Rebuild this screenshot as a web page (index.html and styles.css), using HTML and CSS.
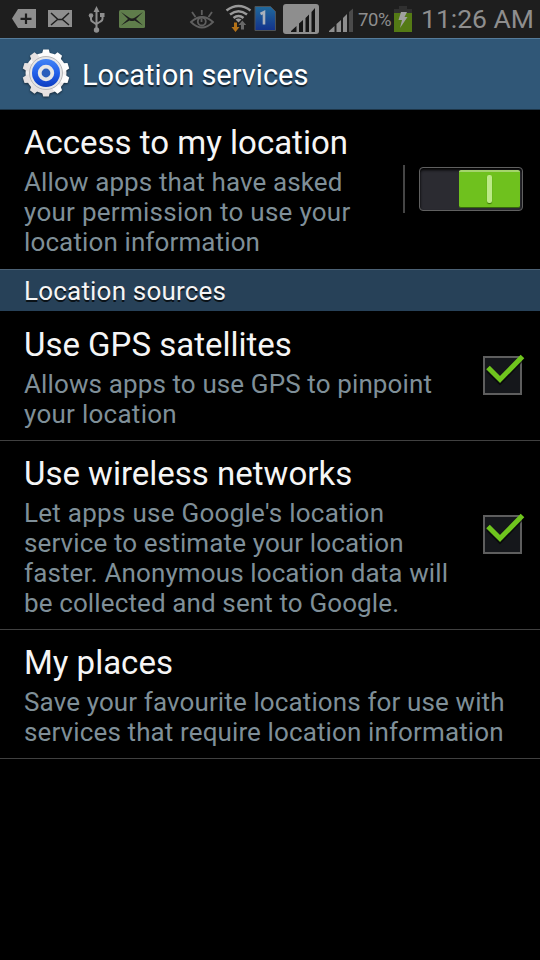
FILE: index.html
```html
<!DOCTYPE html>
<html lang="en">
<head>
<meta charset="utf-8">
<title>Location services</title>
<link rel="stylesheet" href="styles.css">
</head>
<body>
<div class="status">
  <svg class="status-icons" width="354" height="38" viewBox="0 0 354 38">
    <path d="M18 9H36V28H18L12 18.5Z" fill="#8e8e8e"/>
    <path d="M26 13.500V24M20.500 18.800H31.500" stroke="#1e1e1e" stroke-width="2.200"/>
    <rect x="48" y="10" width="24" height="17" fill="#8e8e8e"/>
    <path d="M51 13L58 19.500H62L69 13M51 25L57.500 19.500M69 25L62.500 19.500" fill="none" stroke="#1e1e1e" stroke-width="1.500"/>
    <g fill="none" stroke="#8e8e8e" stroke-width="2">
      <path d="M96.500 10V29M91 16V19.500Q91 21 93 22L96.500 24.500M102.500 16V19Q102.500 20.500 100.500 21.500L96.500 24"/>
      <path d="M96.500 6L99.500 12H93.500ZM100 13H104.500V17H100Z" fill="#8e8e8e" stroke="none"/>
      <circle cx="91" cy="15.500" r="2.300" fill="#8e8e8e" stroke="none"/>
      <circle cx="96.500" cy="30" r="2.700" fill="#8e8e8e" stroke="none"/>
    </g>
    <rect x="119" y="10" width="26" height="18" rx="1.500" fill="#5f7d4b"/>
    <path d="M121 12L129 17.500Q132 19.500 135 17.500L143 12L136 19L143 25.500L134.500 20.500Q132 21.500 129.500 20.500L121 25.500L128 19Z" fill="#1e1e1e"/>
    <g fill="none" stroke="#5f5f5f" stroke-width="1.800">
      <path d="M191 22Q202 12 213 22Q202 33 191 22Z"/>
      <circle cx="201.800" cy="21.500" r="4"/>
      <path d="M201.800 10V15M192 12L195.500 17M212 12L208.500 17M201.500 22V18.500"/>
    </g>
    <g fill="none" stroke="#999" stroke-width="2.500">
      <path d="M226.500 10.500Q238.500 1.500 250.500 10.500M230 14.500Q238.500 8 247 14.500M233.500 18Q238.500 14 243.500 18"/>
      <path d="M235.500 19.500Q238.500 17.500 241.500 19.500L238.500 22.500Z" fill="#999" stroke="none"/>
    </g>
    <path d="M234 22.500H237V27H239.500L235.500 32L231.500 27H234Z" fill="#b47218"/>
    <path d="M241 29.500V25H238.500L242.300 20.500L246.200 25H244V29.500Z" fill="#686868"/>
    <path d="M255 6.500H270.500L275.500 11.500V30.500H255Z" fill="url(#sim)" stroke="#4d5358"/>
    <path d="M260.500 14L264 12.200V24.500" fill="none" stroke="#aab2bc" stroke-width="2.600"/>
    <rect x="283" y="4" width="36" height="30" rx="3" fill="#8e8e8e"/>
    <path d="M291 32V31L296.500 26V32ZM299 32V23.500L303 20V32ZM305.500 32V18L309 14.500V32ZM311.500 32V12L315 8V32Z" fill="#151515"/>
    <path d="M329 32V31L334.500 26V32ZM336.500 32V24L341 20V32ZM343 32V18L347 14V32Z" fill="#8e8e8e"/>
    <path d="M349 32V12L353 8.500V32Z" fill="#4b4b4b"/>
    <defs><linearGradient id="sim" x2="0" y2="1"><stop stop-color="#216a9c"/><stop offset="1" stop-color="#12328c"/></linearGradient></defs>
  </svg>
  <span class="percent">70%</span>
  <svg class="battery" width="18" height="26" viewBox="0 0 18 26">
    <path d="M5 0H13V3H18V26H0V3H5Z" fill="#303030"/>
    <rect y="7" width="18" height="19" fill="#547a15"/>
    <path d="M7 6H13L10.500 11H13.500L6 22L8 14H4.500Z" fill="#a0a0a0"/>
  </svg>
  <span class="clock">11:26 AM</span>
</div>
<header class="header">
  <svg class="gear" width="50" height="50" viewBox="-25 -25 50 50">
    <defs>
      <linearGradient id="metal" x2="0" y2="1"><stop stop-color="#fff"/><stop offset="1" stop-color="#e4dfdf"/></linearGradient>
      <linearGradient id="blue" x2="0" y2="1"><stop stop-color="#4284f6"/><stop offset=".5" stop-color="#2260ea"/><stop offset="1" stop-color="#0c3cc0"/></linearGradient>
    </defs>
    <g fill="url(#metal)">
      <circle r="20.500"/>
      <path id="teeth" d="M-4 -19L-2.800 -23.500H2.800L4 -19V19L2.800 23.500H-2.800L-4 19Z"/>
      <use href="#teeth" transform="rotate(36)"/><use href="#teeth" transform="rotate(72)"/><use href="#teeth" transform="rotate(108)"/><use href="#teeth" transform="rotate(144)"/>
    </g>
    <circle r="16.500" fill="#e5e5e7" stroke="#b8b8ba"/>
    <circle r="14" fill="url(#blue)"/>
    <circle r="6.300" fill="#2a5ebb" stroke="#e6e6e6" stroke-width="3.800"/>
  </svg>
  <h1 class="header-title">Location services</h1>
</header>
<main>
  <section class="row row-access">
    <div class="text">
      <h2 class="title">Access to my location</h2>
      <p class="summary">Allow apps that have asked<br><span class="wide">your permission to use your</span><br>location information</p>
    </div>
    <div class="switch-area"><div class="switch"><div class="thumb"><div class="mark"></div></div></div></div>
  </section>
  <h2 class="section">Location sources</h2>
  <section class="row row-first">
    <div class="text">
      <h2 class="title">Use GPS satellites</h2>
      <p class="summary">Allows apps to use GPS to pinpoint<br><span class="wide">your location</span></p>
    </div>
    <svg class="check" width="44" height="42" viewBox="0 0 44 42"><rect x="2" y="4" width="37" height="37" fill="#15171b" stroke="#5e5e5e" stroke-width="2"/><path d="M6 17L18 29L40 6" fill="none" stroke="#000" stroke-opacity=".55" stroke-width="5"/><path d="M6 14.500L18 26.500L40.500 3.500" fill="none" stroke="#6fc51e" stroke-width="5"/></svg>
  </section>
  <section class="row">
    <div class="text">
      <h2 class="title">Use wireless networks</h2>
      <p class="summary"><span class="wide">Let apps use Google's location</span><br>service to estimate your location<br>faster. Anonymous location data will<br>be collected and sent to Google.</p>
    </div>
    <svg class="check" width="44" height="42" viewBox="0 0 44 42"><rect x="2" y="4" width="37" height="37" fill="#15171b" stroke="#5e5e5e" stroke-width="2"/><path d="M6 17L18 29L40 6" fill="none" stroke="#000" stroke-opacity=".55" stroke-width="5"/><path d="M6 14.500L18 26.500L40.500 3.500" fill="none" stroke="#6fc51e" stroke-width="5"/></svg>
  </section>
  <section class="row">
    <div class="text">
      <h2 class="title">My places</h2>
      <p class="summary">Save your favourite locations for use with<br>services that require location information</p>
    </div>
  </section>
</main>
</body>
</html>
```
FILE: styles.css
```css
* { box-sizing: border-box; margin: 0; }
body {
  width: 540px; height: 960px; overflow: hidden;
  background: #000; color: #f5f5f5;
  font-family: Roboto, sans-serif; font-weight: 400;
}
svg { display: block; flex: none; }
h1, h2 { font-weight: 400; white-space: nowrap; }
.status { display: flex; height: 38px; background: #1e1e1e; color: #8e8e8e; }
.percent { width: 36px; margin-left: 4px; font-size: 18.5px; letter-spacing: -.4px; line-height: 40px; white-space: nowrap; }
.battery { margin-top: 6px; }
.clock { margin-left: 9px; font-size: 26.5px; line-height: 38px; white-space: nowrap; }
.header {
  display: flex; align-items: center; height: 72px; padding: 0 0 2px 21px;
  background: #305777; border-top: 1px solid #557b9a; border-bottom: 1px solid #1d3548;
}
.gear { filter: drop-shadow(0 1px 1px #0008); }
.header-title { margin: 4px 0 0 11px; font-size: 29px; text-shadow: 0 2px 1px #0009; color: #fff; }
.row {
  display: flex; justify-content: space-between; align-items: center;
  padding: 13px 14px 11px 24px; border-bottom: 1px solid #404040;
}
.row-access { height: 159px; border: 0; padding: 11px 17px 11px 24px; }
.row-first { padding-top: 14px; }
.title { font-size: 33px; line-height: 40px; }
.summary { margin-top: 4px; color: #7f8f98; font-size: 26px; line-height: 30px; letter-spacing: .12px; white-space: nowrap; }
.wide { letter-spacing: .27px; }
.section {
  height: 42px; padding-left: 24px; background: #274158; border-top: 1px solid #4b6174;
  font-size: 26px; line-height: 42px; letter-spacing: .2px; text-shadow: 0 2px 0 #000b;
}
.check { position: relative; top: -3px; }
.switch-area { display: flex; align-items: center; height: 48px; margin-top: -2px; padding-left: 14px; border-left: 2px solid #454545; }
.switch {
  display: flex; justify-content: flex-end; width: 104px; height: 44px; padding: 2px;
  background: #2b2b31; border: 1px solid #606060; border-radius: 4px; box-shadow: inset 0 2px 3px #000;
}
.thumb {
  display: flex; justify-content: center; align-items: center; width: 61px; height: 38px;
  background: #6fc11e; border-top: 2px solid #a4d46c; border-bottom: 1px solid #36690b; border-radius: 2px;
}
.mark { width: 5px; height: 28px; background: #bce987; border-radius: 2px; box-shadow: 0 1px 1px #387500; }
```
